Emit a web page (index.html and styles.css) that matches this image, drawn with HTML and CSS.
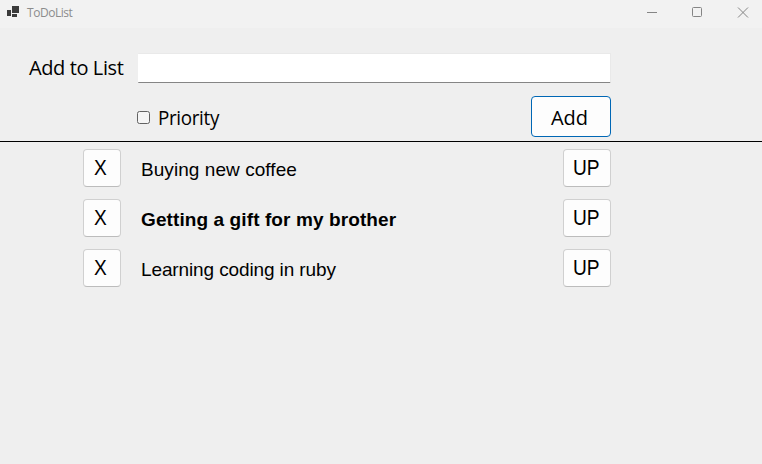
FILE: index.html
```html
<!DOCTYPE html>
<html lang="en">
<head>
<meta charset="utf-8">
<title>ToDoList</title>
<link rel="stylesheet" href="styles.css">
</head>
<body>
<header class="titlebar">
  <svg class="app-icon" width="13" height="13" viewBox="0 0 13 13" fill="#3b3b3b"><path d="M0 4h4v6H0zM5 0h7v7H5zM5 8h5v3H5z"/></svg>
  <span class="title">ToDoList</span>
  <svg class="controls" width="104" height="14" viewBox="0 0 104 14" fill="none" stroke="#858585"><path d="M0 6.500h10"/><rect x="45.500" y="1.500" width="9" height="9" rx="1"/><path d="M91 1.500l10 10M101 1.500l-10 10"/></svg>
</header>
<main>
  <form class="entry">
    <label class="add-label" for="task"><span class="ui">Add to List</span></label>
    <input class="task-input" id="task" type="text">
    <label class="priority"><input class="check" type="checkbox"><span class="ui">Priority</span></label>
    <button class="btn add" type="button"><span class="ui">Add</span></button>
  </form>
  <ul class="tasks">
    <li class="task"><button class="btn remove"><span>X</span></button><span class="task-name">Buying new coffee</span><button class="btn up"><span>UP</span></button></li>
    <li class="task important"><button class="btn remove"><span>X</span></button><span class="task-name">Getting a gift for my brother</span><button class="btn up"><span>UP</span></button></li>
    <li class="task compact"><button class="btn remove"><span>X</span></button><span class="task-name">Learning coding in ruby</span><button class="btn up"><span>UP</span></button></li>
  </ul>
</main>
</body>
</html>
```
FILE: styles.css
```css
* { box-sizing: border-box; }
body { margin: 0; height: 464px; overflow: hidden; background: #efefef; color: #000; font-family: "Liberation Sans", Arial, sans-serif; }
.titlebar { height: 28px; display: flex; align-items: flex-start; padding: 6px 11px 0 7px; background: #f2f2f2; }
.title { margin-left: 7px; font: 12px/14px "Open Sans", sans-serif; color: #8c8c8c; letter-spacing: -0.45px; }
.controls { margin-left: auto; }
.entry { height: 114px; padding-top: 25px; border-bottom: 1px solid #000; display: grid; grid-template-columns: 108px 394px 80px; grid-template-rows: 30px 41px; row-gap: 13px; padding-left: 29px; column-gap: 0; }
.ui { display: inline-block; font: 20px/28px "Open Sans", sans-serif; white-space: nowrap; transform-origin: left; }
.add-label .ui { letter-spacing: -0.4px; margin-top: 1px; }
.task-input { grid-column: 2 / 4; margin: 0 0 0 1px; padding: 0 8px; border: 0; border-top: 1px solid #e9e9e9; border-right: 1px solid #e9e9e9; border-bottom: 1px solid #858585; border-radius: 1px; background: #fff; outline: 0; font-size: 19px; }
.priority { grid-column: 2; display: flex; padding-top: 8px; }
.priority .ui { margin-left: 8px; letter-spacing: -0.35px; transform: scaleX(.94); }
.check { appearance: none; width: 13px; height: 13px; margin: 7px 0 0; border: 1px solid #626262; border-radius: 2.500px; background: #f5f5f5; }
.btn { display: flex; justify-content: center; margin: 0; padding: 0; background: #fdfdfd; border: 1px solid #d0d0d0; border-bottom-color: #bcbcbc; border-radius: 4px; color: #000; font: 21px/24px "Liberation Sans", Arial, sans-serif; }
.add { align-items: flex-start; border-color: #0067b5; padding: 7px 3px 0 0; }
.tasks { margin: 0; padding: 7px 0 0 83px; list-style: none; display: grid; gap: 12px; }
.task { display: flex; width: 528px; height: 38px; }
.task .btn { height: 38px; padding-top: 6px; align-items: flex-start; }
.remove { width: 38px; padding-right: 3px; }
.up { width: 48px; padding-right: 2px; }
.btn.remove span, .btn.up span { display: block; font-size: 22px; transform: scaleX(.87); }
.task-name { flex: 1; padding: 10px 0 0 20px; font-size: 19px; line-height: 22px; letter-spacing: .06px; }
.important .task-name { font-weight: bold; letter-spacing: .1px; }
.compact .task-name { letter-spacing: -.12px; }
```
